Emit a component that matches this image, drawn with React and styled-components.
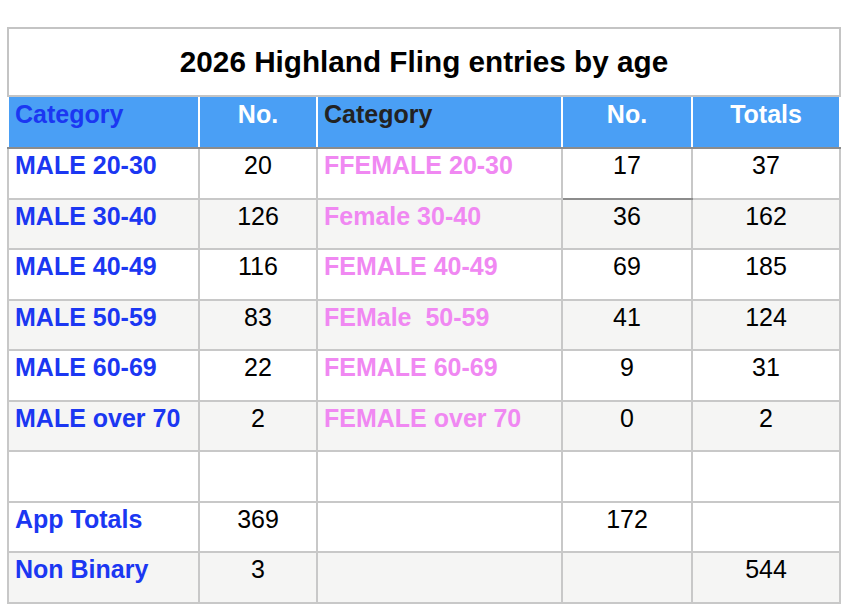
import React from "react";
import styled, { createGlobalStyle } from "styled-components";

const Global = createGlobalStyle`
  html, body { margin: 0; padding: 0; background: #ffffff; }
  body { font-family: "Liberation Sans", Arial, Helvetica, sans-serif; }
`;

const Page = styled.div`
  padding: 27px 0 0 7px;
`;

const Table = styled.table`
  border-collapse: collapse;
  table-layout: fixed;
  width: 832px;
  border: 2px solid #c4c4c4;
  font-family: "Liberation Sans", Arial, Helvetica, sans-serif;
`;

const Col = styled.col`
  width: ${(p) => p.$w}px;
`;

const TitleCell = styled.th`
  height: 66px;
  padding: 0;
  text-align: center;
  vertical-align: middle;
  font-size: 29.7px;
  font-weight: 700;
  color: #000;
  border: 2px solid #c4c4c4;
  background: #ffffff;
`;

const HeadCell = styled.th`
  height: 46px;
  padding: 4px 6px 0;
  vertical-align: top;
  text-align: ${(p) => (p.$center ? "center" : "left")};
  font-size: 25px;
  line-height: 27px;
  font-weight: 700;
  color: ${(p) => p.$color};
  background: #4a9ff5;
  border-top: 2px solid #c4c4c4;
  border-left: 2px solid #ffffff;
  border-right: 2px solid #ffffff;
  border-bottom: 2px solid #8c8c8c;
`;

const Row = styled.tr`
  background: ${(p) => (p.$shade ? "#f5f5f4" : "#ffffff")};
`;

const Cell = styled.td`
  height: 45.5px;
  padding: 3px 6px 0;
  vertical-align: top;
  text-align: ${(p) => (p.$center ? "center" : "left")};
  font-size: 25px;
  line-height: 27px;
  font-weight: ${(p) => (p.$bold ? 700 : 400)};
  color: ${(p) => p.$color || "#000"};
  white-space: pre;
  border: 2px solid #c8c8c8;
  ${(p) => p.$darkBottom && "border-bottom-color: #8c8c8c;"}
`;

const BLUE = "#1b37f2";
const PINK = "#f088f2";

const rows = [
  ["MALE 20-30", "20", "FFEMALE 20-30", "17", "37"],
  ["MALE 30-40", "126", "Female 30-40", "36", "162"],
  ["MALE 40-49", "116", "FEMALE 40-49", "69", "185"],
  ["MALE 50-59", "83", "FEMale  50-59", "41", "124"],
  ["MALE 60-69", "22", "FEMALE 60-69", "9", "31"],
  ["MALE over 70", "2", "FEMALE over 70", "0", "2"],
  ["", "", "", "", ""],
  ["App Totals", "369", "", "172", ""],
  ["Non Binary", "3", "", "", "544"],
];

const shaded = [false, true, false, true, false, true, false, false, true];

export default function App() {
  return (
    <Page>
      <Global />
      <Table>
        <colgroup>
          <Col $w={191} />
          <Col $w={118} />
          <Col $w={245} />
          <Col $w={130} />
          <Col $w={148} />
        </colgroup>
        <thead>
          <tr>
            <TitleCell colSpan={5}>2026 Highland Fling entries by age</TitleCell>
          </tr>
          <tr>
            <HeadCell $color={BLUE}>Category</HeadCell>
            <HeadCell $center $color="#ffffff">No.</HeadCell>
            <HeadCell $color="#222222">Category</HeadCell>
            <HeadCell $center $color="#ffffff">No.</HeadCell>
            <HeadCell $center $color="#ffffff">Totals</HeadCell>
          </tr>
        </thead>
        <tbody>
          {rows.map((r, i) => (
            <Row key={i} $shade={shaded[i]}>
              <Cell $bold $color={BLUE}>{r[0]}</Cell>
              <Cell $center>{r[1]}</Cell>
              <Cell $bold $color={PINK}>{r[2]}</Cell>
              <Cell $center $darkBottom={i === 0}>{r[3]}</Cell>
              <Cell $center>{r[4]}</Cell>
            </Row>
          ))}
        </tbody>
      </Table>
    </Page>
  );
}
